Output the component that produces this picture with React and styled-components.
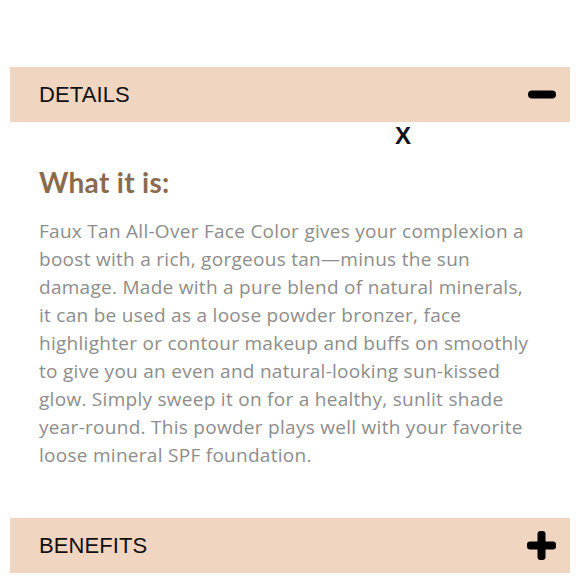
import React from 'react';
import styled, {createGlobalStyle} from 'styled-components';

const GlobalStyle = createGlobalStyle`
  body {
    margin: 0;
    background: #ffffff;
    font-family: Lato, "Liberation Sans", sans-serif;
  }
`;

const Page = styled.div`
  width: 560px;
  padding: 67px 9px 0 10px;
`;

const Bar = styled.div`
  height: 55px;
  background: #f0d5c1;
  display: flex;
  align-items: center;
  justify-content: space-between;
  padding: 0 14px 0 29px;
  box-sizing: border-box;
  margin-top: ${(p) => p.gap || 0}px;
`;

const BarTitle = styled.span`
  font-family: "Liberation Sans", Arial, sans-serif;
  font-size: 22px;
  color: #111;
  letter-spacing: 0.1px;
`;

const Toggle = styled.svg`
  width: 29px;
  height: 29px;
  display: block;
`;

const CloseRow = styled.div`
  height: 28px;
  display: flex;
  padding-left: 385px;
`;

const Close = styled.span`
  font-family: "Liberation Sans", Arial, sans-serif;
  font-weight: 700;
  font-size: 24px;
  line-height: 28px;
  color: #111;
`;

const Content = styled.div`
  padding: 0 0 0 29px;
`;

const Heading = styled.h2`
  margin: 15px 0 0;
  font-family: Lato, sans-serif;
  font-weight: 700;
  font-size: 28px;
  line-height: 34px;
  letter-spacing: 0.3px;
  color: #8b6b50;
`;

const Body = styled.p`
  margin: 18px 0 0;
  font-family: "Open Sans", sans-serif;
  font-size: 19px;
  line-height: 28px;
  letter-spacing: 0.28px;
  color: #8d8d8d;
  white-space: nowrap;
`;

const lines = [
  'Faux Tan All-Over Face Color gives your complexion a',
  'boost with a rich, gorgeous tan—minus the sun',
  'damage. Made with a pure blend of natural minerals,',
  'it can be used as a loose powder bronzer, face',
  'highlighter or contour makeup and buffs on smoothly',
  'to give you an even and natural-looking sun-kissed',
  'glow. Simply sweep it on for a healthy, sunlit shade',
  'year-round. This powder plays well with your favorite',
  'loose mineral SPF foundation.',
];

const Minus = () => (
  <Toggle viewBox="0 0 29 29">
    <rect x="1" y="10.5" width="28" height="8" rx="4" fill="#000" />
  </Toggle>
);

const Plus = () => (
  <Toggle viewBox="0 0 29 29">
    <rect x="0" y="10.5" width="29" height="8" rx="3" fill="#000" />
    <rect x="10.5" y="0" width="8" height="29" rx="3" fill="#000" />
  </Toggle>
);

export default function App() {
  return (
    <Page>
      <GlobalStyle />
      <Bar>
        <BarTitle>DETAILS</BarTitle>
        <Minus />
      </Bar>
      <CloseRow>
        <Close>X</Close>
      </CloseRow>
      <Content>
        <Heading>What it is:</Heading>
        <Body>
          {lines.map((line, i) => (
            <React.Fragment key={i}>
              {line}
              {i < lines.length - 1 && <br />}
            </React.Fragment>
          ))}
        </Body>
      </Content>
      <Bar gap={49}>
        <BarTitle>BENEFITS</BarTitle>
        <Plus />
      </Bar>
    </Page>
  );
}
